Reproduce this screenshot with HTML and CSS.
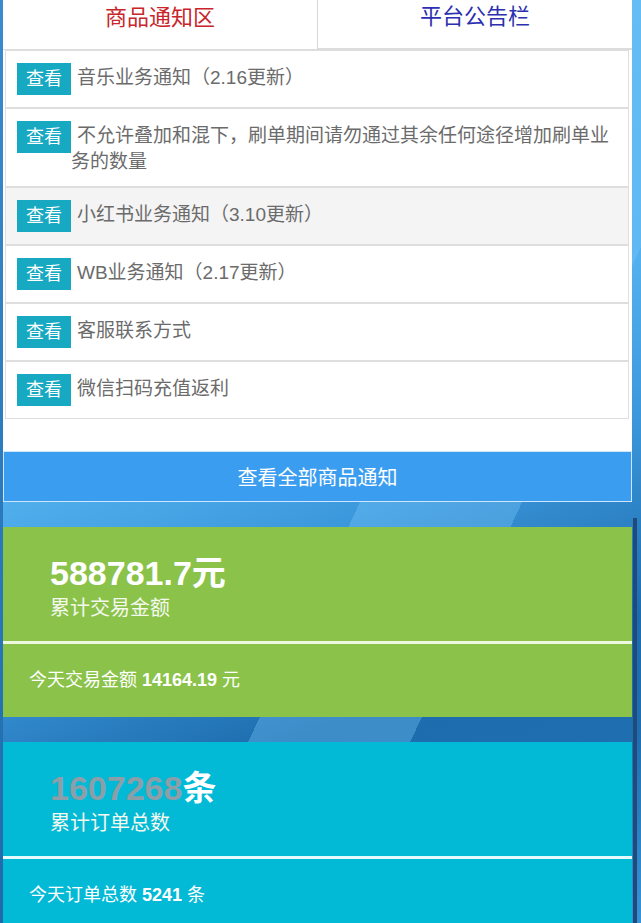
FILE: index.html
```html
<!DOCTYPE html>
<html lang="zh-CN">
<head>
<meta charset="utf-8">
<title>商品通知区</title>
<link rel="stylesheet" href="styles.css">
</head>
<body>
<div class="page">
  <section class="notice-panel">
    <div class="tabs">
      <div class="tab tab-active">商品通知区</div>
      <div class="tab tab-other">平台公告栏</div>
    </div>
    <ul class="notice-list">
      <li class="notice-row"><span class="badge">查看</span><span class="notice-text">音乐业务通知（2.16更新）</span></li>
      <li class="notice-row"><span class="badge">查看</span><span class="notice-text">不允许叠加和混下，刷单期间请勿通过其余任何途径增加刷单业务的数量</span></li>
      <li class="notice-row notice-row-hover"><span class="badge">查看</span><span class="notice-text">小红书业务通知（3.10更新）</span></li>
      <li class="notice-row"><span class="badge">查看</span><span class="notice-text">WB业务通知（2.17更新）</span></li>
      <li class="notice-row"><span class="badge">查看</span><span class="notice-text">客服联系方式</span></li>
      <li class="notice-row"><span class="badge">查看</span><span class="notice-text">微信扫码充值返利</span></li>
    </ul>
    <div class="all-button">查看全部商品通知</div>
  </section>

  <section class="stat-card stat-green">
    <div class="stat-main">
      <div class="stat-value">588781.7元</div>
      <div class="stat-label">累计交易金额</div>
    </div>
    <div class="stat-divider"></div>
    <div class="stat-today">今天交易金额 <b>14164.19</b> 元</div>
  </section>

  <section class="stat-card stat-cyan">
    <div class="stat-main">
      <div class="stat-value"><span class="muted-num">1607268</span>条</div>
      <div class="stat-label">累计订单总数</div>
    </div>
    <div class="stat-divider"></div>
    <div class="stat-today">今天订单总数 <b>5241</b> 条</div>
  </section>
</div>
</body>
</html>
```

FILE: styles.css
```css
* { box-sizing: border-box; }

html, body {
  margin: 0;
  padding: 0;
}

body {
  font-family: "Liberation Sans", "Noto Sans CJK SC", sans-serif;
  width: 641px;
  height: 923px;
  overflow: hidden;
}

.page {
  position: relative;
  min-height: 923px;
  padding: 0 9px 0 3px;
  background:
    linear-gradient(to right, rgba(20, 60, 110, 0) 633px, #1e4b7c 633px, #1e4b7c 637px, rgba(20, 60, 110, 0) 637px) 0 518px / 641px 405px no-repeat,
    linear-gradient(115deg, rgba(255,255,255,0) 0 55%, rgba(120, 200, 250, 0.35) 55% 70%, rgba(255,255,255,0) 70%),
    linear-gradient(160deg, #63bdf6 0%, #52b0ee 42%, #3c98dc 55%, #1d6dae 72%, #1f6eaf 82%, #3a97da 100%);
}

.page::before {
  content: "";
  position: absolute;
  left: 0;
  top: 0;
  width: 3px;
  height: 923px;
  background: linear-gradient(#3a8cce, #2a78bb 60%, #1f6aa9);
}

/* notice panel */
.notice-panel {
  background: #fff;
  width: 629px;
}

.tabs {
  display: flex;
  height: 50px;
}

.tab {
  flex: 1;
  display: flex;
  align-items: center;
  justify-content: center;
  font-size: 22px;
  padding-bottom: 20px;
  border-bottom: 1px solid #dcdcdc;
}

.tab-active {
  color: #c8262b;
  border-right: 1px solid #d8d8d8;
}

.tab-other {
  color: #2c30b0;
  border-bottom: 2px solid #dcdcdc;
}

.notice-list {
  list-style: none;
  margin: 0 3px 32px 2px;
  padding: 0;
}

.notice-row {
  display: flex;
  align-items: flex-start;
  border: 1px solid #dedede;
  padding: 12px 12px 11px 11px;
  background: #fff;
  min-height: 58px;
}

.notice-row-hover {
  background: #f4f4f4;
}

.badge {
  flex: none;
  width: 54px;
  height: 32px;
  background: #17a8c2;
  color: #fff;
  font-size: 18px;
  line-height: 32px;
  text-align: center;
}

.notice-text {
  flex: 1;
  color: #6b6b6b;
  font-size: 19px;
  line-height: 26px;
  padding-top: 2px;
  text-indent: 6px;
}

.all-button {
  height: 51px;
  background: #3b9df0;
  border: 1px solid #cde6fb;
  color: #fff;
  font-size: 20px;
  display: flex;
  align-items: center;
  justify-content: center;
}

/* stat cards */
.stat-card {
  width: 629px;
  color: #fff;
}

.stat-green {
  margin-top: 25px;
  background: #8bc34a;
  height: 190px;
}

.stat-cyan {
  margin-top: 25px;
  background: #03bad6;
  height: 200px;
}

.stat-main {
  height: 114px;
  padding: 27px 0 0 47px;
}

.stat-value {
  font-size: 34px;
  font-weight: bold;
  line-height: 38px;
}

.muted-num {
  color: #8c9ea8;
}

.stat-label {
  font-size: 20px;
  line-height: 28px;
  margin-top: 2px;
  color: #f4f8ee;
}

.stat-divider {
  height: 3px;
  background: #eef8df;
}

.stat-cyan .stat-divider {
  background: #e6fbff;
}

.stat-today {
  font-size: 18px;
  padding: 23px 0 0 26px;
  line-height: 26px;
}

.stat-today b {
  font-weight: bold;
}
```
